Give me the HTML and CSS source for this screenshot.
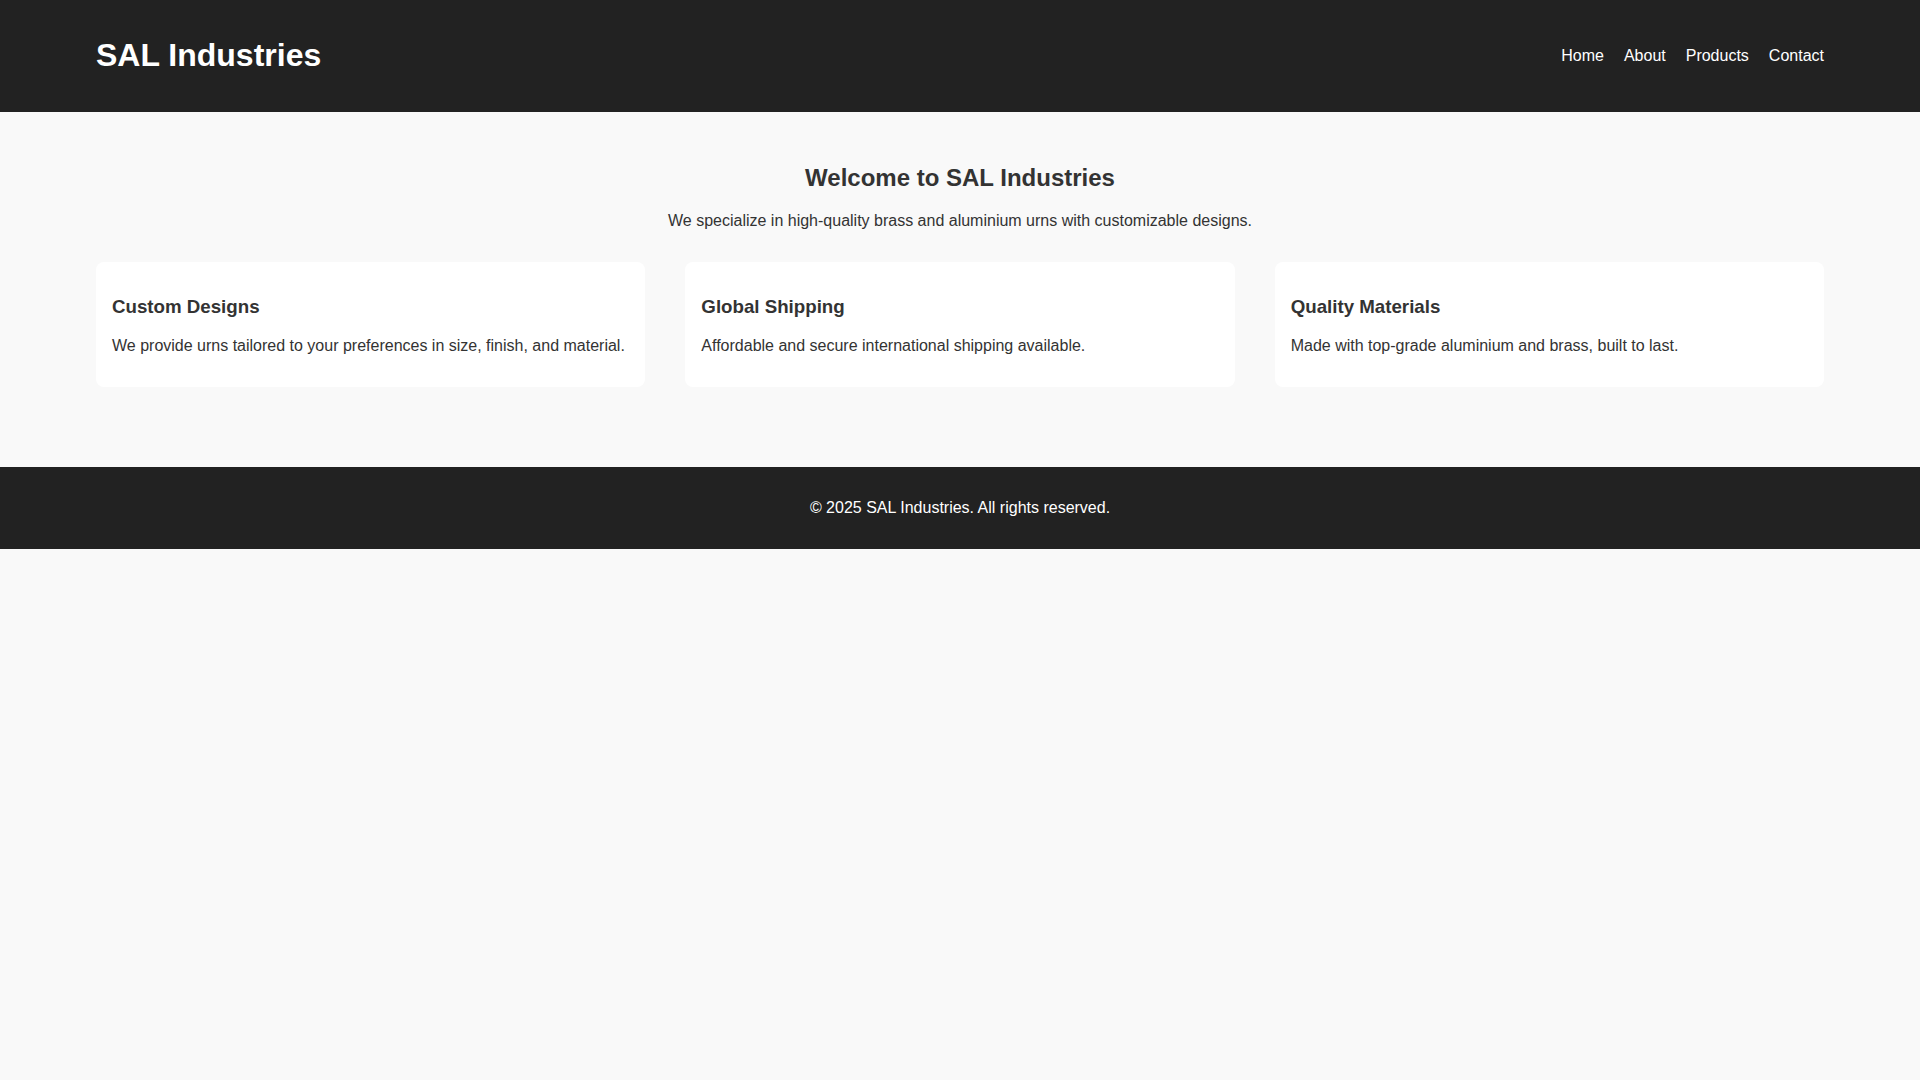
FILE: index.html
```html
<!DOCTYPE html>
<html lang="en">
<head>
<meta charset="utf-8">
<title>SAL Industries</title>
<link rel="stylesheet" href="styles.css">
</head>
<body>
<header class="site-header">
  <h1 class="logo">SAL Industries</h1>
  <nav class="nav">
    <a href="#">Home</a>
    <a href="#">About</a>
    <a href="#">Products</a>
    <a href="#">Contact</a>
  </nav>
</header>
<main class="main">
  <section class="hero">
    <h2>Welcome to SAL Industries</h2>
    <p>We specialize in high-quality brass and aluminium urns with customizable designs.</p>
  </section>
  <section class="features">
    <div class="card">
      <h3>Custom Designs</h3>
      <p>We provide urns tailored to your preferences in size, finish, and material.</p>
    </div>
    <div class="card">
      <h3>Global Shipping</h3>
      <p>Affordable and secure international shipping available.</p>
    </div>
    <div class="card">
      <h3>Quality Materials</h3>
      <p>Made with top-grade aluminium and brass, built to last.</p>
    </div>
  </section>
</main>
<footer class="site-footer">
  <p>&copy; 2025 SAL Industries. All rights reserved.</p>
</footer>
</body>
</html>
```

FILE: styles.css
```css
* { box-sizing: border-box; }

body {
  margin: 0;
  font-family: "Liberation Sans", Arial, sans-serif;
  background: #f9f9f9;
  color: #333;
}

.site-header {
  background: #222;
  color: #fff;
  padding: 1rem 5%;
  display: flex;
  justify-content: space-between;
  align-items: center;
}

.logo {
  font-size: 2em;
  margin: 0.67em 0;
}

.nav {
  display: flex;
  gap: 20px;
}

.nav a {
  color: #fff;
  text-decoration: none;
  font-size: 16px;
}

.main {
  padding: 2rem 5%;
}

.hero {
  text-align: center;
}

.hero h2 {
  font-size: 1.5em;
  margin: 0.83em 0;
}

.hero p {
  margin: 0;
}

.features {
  display: grid;
  grid-template-columns: repeat(3, 1fr);
  gap: 40px;
  margin-top: 32px;
  margin-bottom: 48px;
}

.card {
  background: #fff;
  border-radius: 8px;
  padding: 1rem;
}

.card h3 {
  font-size: 1.17em;
  margin: 1em 0;
}

.card p {
  margin: 1em 0;
}

.site-footer {
  background: #222;
  color: #fff;
  text-align: center;
  padding: 1rem;
}

.site-footer p {
  margin: 1em 0;
}
```
